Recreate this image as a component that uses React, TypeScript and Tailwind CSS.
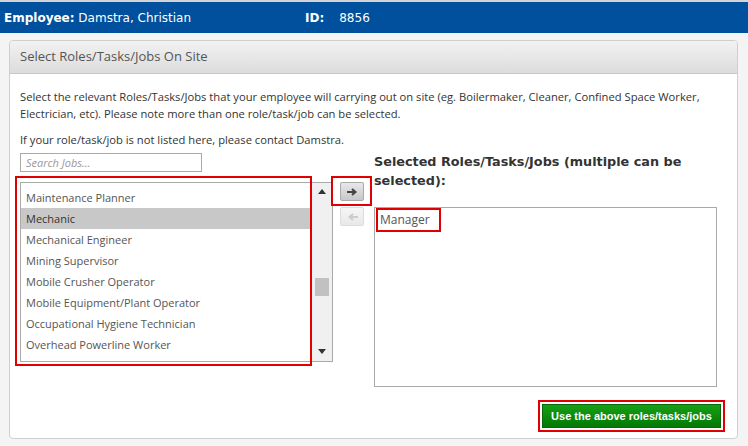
import React from 'react';

const jobs = [
  'Maintenance Planner',
  'Mechanic',
  'Mechanical Engineer',
  'Mining Supervisor',
  'Mobile Crusher Operator',
  'Mobile Equipment/Plant Operator',
  'Occupational Hygiene Technician',
  'Overhead Powerline Worker',
  'Open Cut Pit Miner Leader',
];

export default function App() {
  return (
    <div className="w-[748px] h-[446px] overflow-hidden bg-[#f4f4f4] font-['Open_Sans',sans-serif]">
      <div className="h-[2px] bg-[#d4d4d4]" />
      <div className="h-[31px] bg-[#00509d] flex items-center text-white text-[12px] font-['DejaVu_Sans',sans-serif]">
        <span className="pl-[4px] w-[305px]">
          <b>Employee:</b> Damstra, Christian
        </span>
        <b>ID:</b>
        <span className="ml-[15px]">8856</span>
      </div>

      <div className="ml-[9px] mt-[7px] w-[729px] h-[399px] bg-white border border-[#cfcfcf] rounded-[4px] overflow-hidden">
        <div className="h-[33px] bg-gradient-to-b from-[#f2f2f2] to-[#dcdcdc] border-b border-[#c8c8c8] flex items-center pl-[10px] text-[13px] text-[#555]">
          Select Roles/Tasks/Jobs On Site
        </div>

        <div className="pl-[10px] pr-[20px] pt-[14px] text-[11.2px] text-[#333] leading-[17px]">
          <p>
            Select the relevant Roles/Tasks/Jobs that your employee will carrying out on site (eg. Boilermaker, Cleaner, Confined Space Worker, Electrician, etc). Please note more than one role/task/job can be selected.
          </p>
          <p className="mt-[9px]">If your role/task/job is not listed here, please contact Damstra.</p>

          <div className="flex mt-[5px]">
            <div className="w-[313px] relative">
              <div className="w-[182px] h-[19px] border border-[#aaa] flex items-center pl-[5px] text-[11px] italic text-[#999]">
                Search Jobs...
              </div>
              <div className="mt-[10px] h-[180px] border border-[#aaa] flex overflow-hidden">
                <div className="flex-1 pt-[4px]">
                  {jobs.map((j) => (
                    <div
                      key={j}
                      className={`h-[21px] flex items-center pl-[5px] text-[11px] ${j === 'Mechanic' ? 'bg-[#c8c8c8] text-[#333]' : 'text-[#555]'}`}
                    >
                      {j}
                    </div>
                  ))}
                </div>
                <div className="w-[20px] bg-[#f0f0f0] flex flex-col items-center pt-[6px]">
                  <svg width="8" height="5" viewBox="0 0 8 5"><path d="M0 5 L4 0 L8 5Z" fill="#333" /></svg>
                  <div className="mt-[84px] w-[14px] h-[18px] bg-[#c1c1c1]" />
                  <div className="flex-1" />
                  <svg width="8" height="5" viewBox="0 0 8 5" className="mb-[7px]"><path d="M0 0 L4 5 L8 0Z" fill="#333" /></svg>
                </div>
              </div>
              <div className="absolute left-[-5px] top-[23px] w-[297px] h-[190px] border-2 border-[#e00000] pointer-events-none" />
            </div>

            <div className="w-[24px] ml-[7px] pt-[29px] flex flex-col gap-[6px] relative">
              <div className="h-[19px] rounded-[2px] border border-[#aaa] bg-gradient-to-b from-[#e8e8e8] to-[#c8c8c8] flex items-center justify-center">
                <svg width="11" height="8" viewBox="0 0 11 8"><path d="M0 4 H8 M5 1 L8.5 4 L5 7" stroke="#444" strokeWidth="2" fill="none" /></svg>
              </div>
              <div className="h-[19px] rounded-[2px] border border-[#ddd] bg-gradient-to-b from-[#f6f6f6] to-[#e8e8e8] flex items-center justify-center">
                <svg width="11" height="8" viewBox="0 0 11 8"><path d="M11 4 H3 M6 1 L2.5 4 L6 7" stroke="#ccc" strokeWidth="2" fill="none" /></svg>
              </div>
              <div className="absolute left-[-9px] top-[23px] w-[41px] h-[30px] border-2 border-[#e00000] pointer-events-none" />
            </div>

            <div className="ml-[10px] w-[343px] flex flex-col">
              <div className="font-['DejaVu_Sans',sans-serif] font-bold text-[12.8px] leading-[19px] text-[#333] mt-[-1px]">
                Selected Roles/Tasks/Jobs (multiple can be selected):
              </div>
              <div className="mt-[17px] h-[180px] border border-[#aaa] relative">
                <div className="pl-[5px] pt-[2px] text-[12px] text-[#555] leading-[20px]">Manager</div>
                <div className="absolute left-[1px] top-[0px] w-[65px] h-[24px] border-2 border-[#e00000]" />
              </div>
              <div className="flex justify-end mt-[13px] mr-[-8px]">
                <div className="border-2 border-[#e00000] p-[2px]">
                  <div className="w-[179px] h-[24px] bg-gradient-to-b from-[#16a016] to-[#047804] border border-[#0a6a0a] flex items-center justify-center whitespace-nowrap text-white font-bold text-[11px] font-['Liberation_Sans',sans-serif]">
                    Use the above roles/tasks/jobs
                  </div>
                </div>
              </div>
            </div>
          </div>
        </div>
      </div>
    </div>
  );
}
